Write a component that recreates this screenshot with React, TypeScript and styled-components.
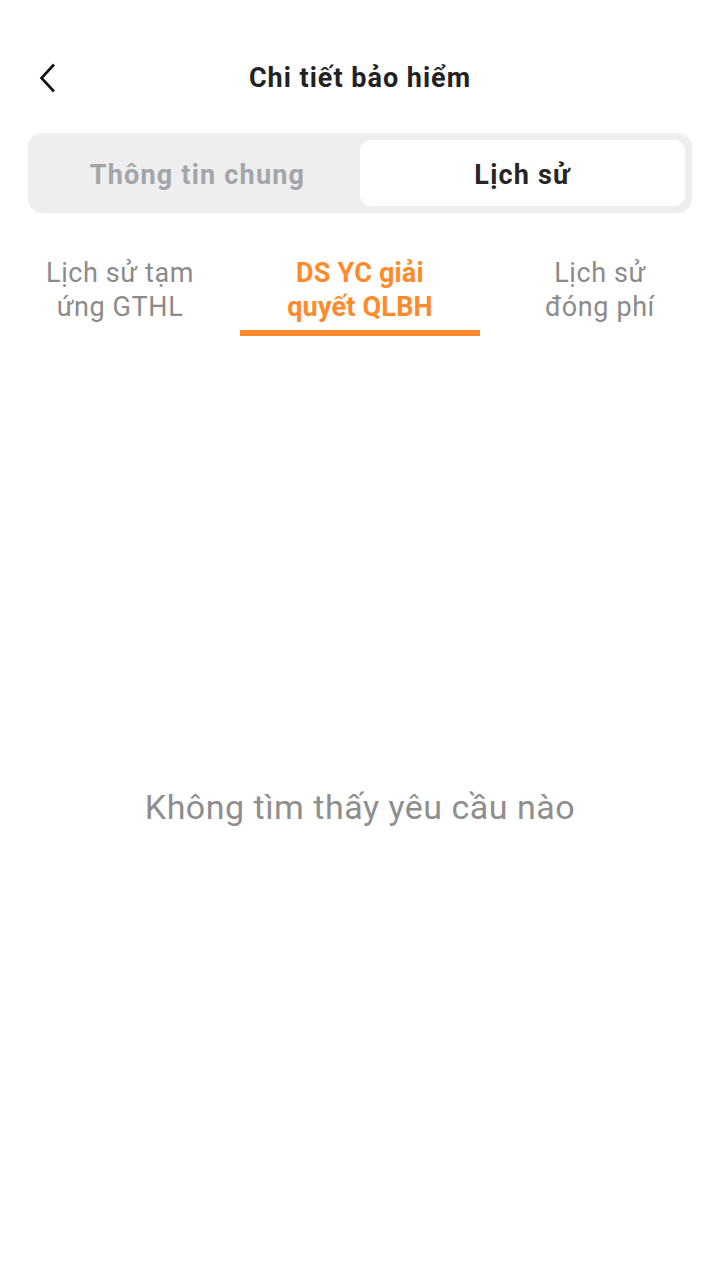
import React, { useState } from "react";
import styled, { createGlobalStyle } from "styled-components";

const Global = createGlobalStyle`
  html, body { margin: 0; padding: 0; background: #ffffff; }
  body { font-family: Roboto, "Noto Sans", Arial, sans-serif; }
  * { box-sizing: border-box; }
`;

const Page = styled.div`
  width: 720px;
  height: 1280px;
  display: flex;
  flex-direction: column;
  background: #fff;
`;

const Header = styled.div`
  height: 56px;
  margin-top: 50px;
  display: flex;
  align-items: center;
  justify-content: center;
  position: relative;
`;

const BackButton = styled.button`
  position: absolute;
  left: 32px;
  top: 50%;
  transform: translateY(-50%);
  width: 32px;
  height: 40px;
  border: none;
  background: none;
  padding: 0;
  display: flex;
  align-items: center;
  justify-content: center;
  cursor: pointer;
`;

const Title = styled.h1`
  margin: 0;
  font-size: 27px;
  font-weight: 700;
  color: #222222;
  letter-spacing: 1px;
`;

const Segmented = styled.div`
  margin: 27px 28px 0;
  height: 80px;
  background: #eeeeee;
  border-radius: 14px;
  padding: 7px;
  display: grid;
  grid-template-columns: 1fr 1fr;
`;

const Segment = styled.button<{ $active: boolean }>`
  border: none;
  border-radius: 11px;
  padding: 4px 0 0;
  background: ${(p) => (p.$active ? "#ffffff" : "transparent")};
  color: ${(p) => (p.$active ? "#262626" : "#a2a5aa")};
  font-family: Roboto, sans-serif;
  font-size: 27px;
  font-weight: 700;
  letter-spacing: 1.2px;
  cursor: pointer;
`;

const SubTabs = styled.div`
  margin-top: 43px;
  display: grid;
  grid-template-columns: repeat(3, 1fr);
`;

const SubTab = styled.button<{ $active: boolean }>`
  border: none;
  background: none;
  padding: 0 0 6px;
  display: flex;
  flex-direction: column;
  align-items: center;
  font-family: Roboto, sans-serif;
  font-size: 27px;
  line-height: 34px;
  letter-spacing: ${(p) => (p.$active ? "0.2px" : "0.6px")};
  font-weight: ${(p) => (p.$active ? 700 : 400)};
  color: ${(p) => (p.$active ? "#ff8a2b" : "#8b8b8b")};
  border-bottom: 6px solid ${(p) => (p.$active ? "#ff8a2b" : "transparent")};
  cursor: pointer;
  text-align: center;
`;

const Empty = styled.div`
  flex: 1;
  display: flex;
  justify-content: center;
  padding-top: 451px;
  font-size: 34px;
  letter-spacing: 0.5px;
  color: #8e8e8e;
`;

const tabs = [
  ["Lịch sử tạm", "ứng GTHL"],
  ["DS YC giải", "quyết QLBH"],
  ["Lịch sử", "đóng phí"],
];

export default function App() {
  const [seg, setSeg] = useState(1);
  const [sub, setSub] = useState(1);
  return (
    <Page>
      <Global />
      <Header>
        <BackButton aria-label="back">
          <svg width="18" height="30" viewBox="0 0 18 30" fill="none">
            <path d="M15 1.5 L2.5 15 L15 28.5" stroke="#111" strokeWidth="2.6" strokeLinejoin="miter" />
          </svg>
        </BackButton>
        <Title>Chi tiết bảo hiểm</Title>
      </Header>
      <Segmented>
        {["Thông tin chung", "Lịch sử"].map((t, i) => (
          <Segment key={t} $active={seg === i} onClick={() => setSeg(i)}>
            {t}
          </Segment>
        ))}
      </Segmented>
      <SubTabs>
        {tabs.map((t, i) => (
          <SubTab key={i} $active={sub === i} onClick={() => setSub(i)}>
            <span>{t[0]}</span>
            <span>{t[1]}</span>
          </SubTab>
        ))}
      </SubTabs>
      <Empty>Không tìm thấy yêu cầu nào</Empty>
    </Page>
  );
}
